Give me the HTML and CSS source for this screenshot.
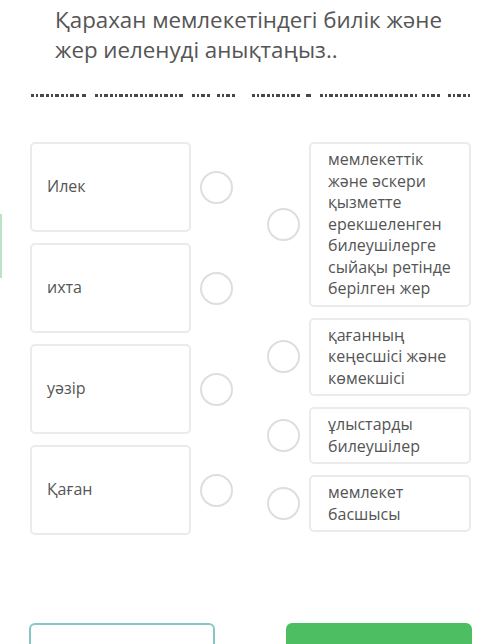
FILE: index.html
```html
<!DOCTYPE html>
<html lang="kk">
<head>
<meta charset="utf-8">
<link rel="stylesheet" href="styles.css">
</head>
<body>
<div class="side-tab"></div>
<main class="page">
  <h1 class="title">Қарахан мемлекетіндегі билік және жер иеленуді анықтаңыз..</h1>

  <div class="dashes">
    <div class="half half-a">
      <span class="g g1"></span><span class="g g2"></span><span class="g g3"></span><span class="g g4"></span><span class="g g5"></span>
    </div>
    <div class="half half-b">
      <span class="g g1"></span><span class="g g2"></span><span class="g g3"></span><span class="g g4"></span><span class="g g5"></span>
    </div>
  </div>

  <div class="match">
    <div class="col col-left">
      <div class="row"><div class="card">Илек</div><span class="dot"></span></div>
      <div class="row"><div class="card">ихта</div><span class="dot"></span></div>
      <div class="row"><div class="card">уәзір</div><span class="dot"></span></div>
      <div class="row"><div class="card">Қаған</div><span class="dot"></span></div>
    </div>
    <div class="col col-right">
      <div class="row"><span class="dot"></span><div class="card">мемлекеттік және әскери қызметте ерекшеленген билеушілерге сыйақы ретінде берілген жер</div></div>
      <div class="row"><span class="dot"></span><div class="card">қағанның кеңесшісі және көмекшісі</div></div>
      <div class="row"><span class="dot"></span><div class="card">ұлыстарды билеушілер</div></div>
      <div class="row"><span class="dot"></span><div class="card">мемлекет басшысы</div></div>
    </div>
  </div>

  <div class="buttons">
    <button class="btn btn-outline"></button>
    <button class="btn btn-green"></button>
  </div>
</main>
</body>
</html>
```

FILE: styles.css
```css
html, body {
  margin: 0;
  padding: 0;
  background: #fff;
}

body {
  font-family: "Open Sans", "Noto Sans", sans-serif;
  color: #555;
  overflow: hidden;
  height: 644px;
}

.side-tab {
  position: absolute;
  left: 0;
  top: 214px;
  width: 2px;
  height: 64px;
  background: #b9e4c6;
}

.page {
  padding-top: 5px;
  height: 644px;
  box-sizing: border-box;
  overflow: hidden;
}

.title {
  margin: 0;
  padding: 0 40px 0 55px;
  font-size: 22.3px;
  font-weight: 400;
  line-height: 30px;
  color: #555;
}

.dashes {
  margin-top: 29px;
  height: 3px;
  display: flex;
  padding-left: 31px;
  gap: 15px;
}

.half {
  display: flex;
  height: 3px;
}

.g {
  display: block;
  height: 3px;
  background: repeating-linear-gradient(90deg, #484848 0 3px, transparent 3px 5px, #484848 5px 7px, transparent 7px 9px, #484848 9px 13px, transparent 13px 15px);
}

.g2 {
  background: #484848;
}

.half-a .g1 { width: 49px; }
.half-a .g2 { width: 4px; margin-left: 2px; }
.half-a .g3 { width: 88px; margin-left: 9px; }
.half-a .g4 { width: 20px; margin-left: 9px; }
.half-a .g5 { width: 20px; margin-left: 5px; }

.half-b .g1 { width: 48px; }
.half-b .g2 { width: 5px; margin-left: 6px; }
.half-b .g3 { width: 97px; margin-left: 9px; }
.half-b .g4 { width: 20px; margin-left: 5px; }
.half-b .g5 { width: 22px; margin-left: 6px; }

.match {
  margin-top: 45px;
  padding: 0 29px 0 30px;
  display: flex;
  justify-content: space-between;
}

.col {
  display: flex;
  flex-direction: column;
}

.col-left {
  gap: 11px;
}

.col-right {
  gap: 11px;
}

.row {
  display: flex;
  align-items: center;
  gap: 9px;
}

.card {
  box-sizing: border-box;
  border: 2px solid #ebebeb;
  border-radius: 5px;
  background: #fff;
  font-size: 16px;
  line-height: 21.5px;
  color: #555;
}

.col-left .card {
  width: 161px;
  height: 90px;
  display: flex;
  align-items: center;
  padding: 0 15px;
}

.col-right .card {
  width: 162px;
  padding: 5px 12px 5px 17px;
}

.dot {
  display: block;
  box-sizing: border-box;
  width: 33px;
  height: 33px;
  border-radius: 50%;
  border: 2px solid #dedede;
  flex: none;
}

.buttons {
  margin-top: 88px;
  padding: 0 28px 0 29px;
  display: flex;
  justify-content: space-between;
}

.btn {
  width: 186px;
  height: 46px;
  border-radius: 6px;
  padding: 0;
}

.btn-outline {
  background: #fff;
  border: 2px solid #86c7c6;
}

.btn-green {
  background: #4dbf62;
  border: 2px solid #4dbf62;
}
```
